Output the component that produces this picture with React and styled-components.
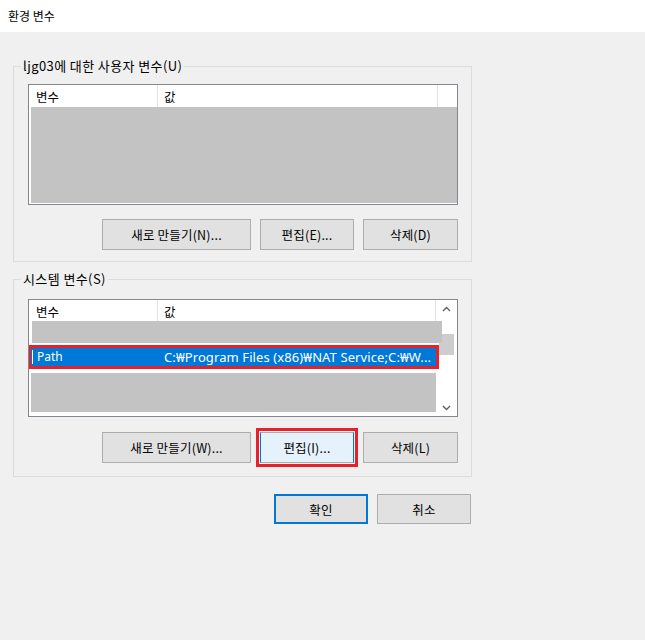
import React from 'react'
import styled, { createGlobalStyle } from 'styled-components'

const GlobalStyle = createGlobalStyle`
    html, body {
        margin: 0;
        padding: 0;
        background: #f0f0f0;
    }
    body {
        font-family: "Noto Sans CJK KR", "Noto Sans", sans-serif;
        font-size: 12px;
        color: #000;
    }
`

const Window = styled.div`
    width: 645px;
    height: 640px;
    background: #f0f0f0;
    display: flex;
    flex-direction: column;
`

const TitleBar = styled.div`
    height: 32px;
    background: #fff;
    display: flex;
    align-items: center;
    padding: 0 0 2px 8px;
    box-sizing: border-box;
    font-size: 12px;
`

const Content = styled.div`
    width: 459px;
    padding: 26px 0 0 13px;
    display: flex;
    flex-direction: column;
`

const Group = styled.fieldset`
    margin: ${p => p.$mt || 0}px 0 0 0;
    border: 1px solid #dcdcdc;
    padding: ${p => p.$pt}px 13px ${p => p.$pb}px 14px;
    min-width: 0;
    display: flex;
    flex-direction: column;
`

const Legend = styled.legend`
    padding: 0 2px;
    margin-left: -7px;
    font-size: 13px;
    letter-spacing: 0.4px;
    line-height: 16px;
`

const ListView = styled.div`
    height: ${p => p.$h}px;
    box-sizing: border-box;
    border: 1px solid #828790;
    background: #fff;
    display: flex;
    overflow: hidden;
`

const ListMain = styled.div`
    flex: 1;
    display: flex;
    flex-direction: column;
    min-width: 0;
`

const Header = styled.div`
    height: ${p => p.$h}px;
    display: flex;
    flex-shrink: 0;
`

const HeaderCell = styled.div`
    width: ${p => (p.$w ? `${p.$w}px` : 'auto')};
    flex: ${p => (p.$w ? 'none' : 1)};
    box-sizing: border-box;
    border-right: ${p => (p.$last ? 'none' : '1px solid #e5e5e5')};
    padding: 3px 0 0 ${p => p.$pl || 0}px;
    font-size: 12.5px;
    line-height: 18px;
`

const Redacted = styled.div`
    background: #c3c3c3;
    height: ${p => (p.$h ? `${p.$h}px` : 'auto')};
    flex: ${p => (p.$h ? 'none' : 1)};
    width: ${p => (p.$w ? `${p.$w}px` : 'auto')};
    margin: ${p => p.$m || '0'};
    position: relative;
    z-index: 1;
`

const SelectedRow = styled.div`
    height: 24px;
    box-sizing: border-box;
    width: 411px;
    margin-left: -1px;
    border: 3px solid #e8202a;
    background: #0078d7;
    color: #fff;
    display: flex;
    align-items: center;
    font-family: "Noto Sans", "Noto Sans CJK KR", sans-serif;
    font-size: 12px;
    position: relative;
    z-index: 2;
    &::before {
        content: '';
        width: 1px;
        height: 14px;
        background: #fff;
        margin-left: 1px;
    }
`

const RowCell = styled.div`
    width: ${p => (p.$w ? `${p.$w}px` : 'auto')};
    flex: ${p => (p.$w ? 'none' : 1)};
    padding-left: ${p => p.$pl}px;
    white-space: nowrap;
    box-sizing: border-box;
    line-height: 16px;
    font-size: ${p => p.$fs || 12}px;
    letter-spacing: ${p => p.$ls || 0}px;
`

const ScrollBar = styled.div`
    width: 21px;
    flex-shrink: 0;
    background: #fff;
    display: flex;
    flex-direction: column;
    align-items: center;
`

const Arrow = styled.div`
    height: ${p => p.$h}px;
    display: flex;
    align-items: center;
    justify-content: center;
    color: #606060;
`

const Track = styled.div`
    flex: 1;
    width: 100%;
    display: flex;
    justify-content: center;
`

const Thumb = styled.div`
    width: 15px;
    height: 21px;
    margin-top: 17px;
    background: #cdcdcd;
`

const ButtonRow = styled.div`
    display: flex;
    justify-content: flex-end;
    gap: ${p => p.$gap || 9}px;
    margin-top: ${p => p.$mt}px;
    padding-right: ${p => p.$pr || 0}px;
`

const Button = styled.button`
    width: ${p => p.$w}px;
    height: ${p => p.$h || 31}px;
    box-sizing: border-box;
    padding: 0;
    margin: 0;
    background: ${p => (p.$hot ? '#e5f1fb' : '#e1e1e1')};
    border: ${p => (p.$default ? '2px solid #0078d7' : '1px solid #adadad')};
    border-left-color: ${p => (p.$hot ? '#0078d7' : undefined)};
    border-right-color: ${p => (p.$hot ? '#0078d7' : undefined)};
    outline: ${p => (p.$marked ? '3px solid #e8202a' : 'none')};
    outline-offset: 1px;
    font-family: "Noto Sans CJK KR", "Noto Sans", sans-serif;
    font-size: 12.5px;
    letter-spacing: 0.2px;
    color: #000;
`

const Chevron = ({ up }) => (
  <svg width="9" height="6" viewBox="0 0 9 6">
    <path
      d={up ? 'M1 5 L4.5 1.5 L8 5' : 'M1 1 L4.5 4.5 L8 1'}
      fill="none"
      stroke="#606060"
      strokeWidth="1.4"
    />
  </svg>
)

const App = () => {
  return (
    <Window>
      <GlobalStyle />
      <TitleBar>환경 변수</TitleBar>
      <Content>
        <Group $pt={10} $pb={11}>
          <Legend>ljg03에 대한 사용자 변수(U)</Legend>
          <ListView $h={121}>
            <ListMain>
              <Header $h={22}>
                <HeaderCell $w={129} $pl={7}>변수</HeaderCell>
                <HeaderCell $w={280} $pl={6}>값</HeaderCell>
                <HeaderCell $last />
              </Header>
              <Redacted $m="0 0 1px 2px" />
            </ListMain>
          </ListView>
          <ButtonRow $mt={14}>
            <Button $w={149}>새로 만들기(N)...</Button>
            <Button $w={94}>편집(E)...</Button>
            <Button $w={95}>삭제(D)</Button>
          </ButtonRow>
        </Group>

        <Group $mt={9} $pt={12} $pb={13}>
          <Legend>시스템 변수(S)</Legend>
          <ListView $h={118}>
            <ListMain>
              <Header $h={21}>
                <HeaderCell $w={129} $pl={7}>변수</HeaderCell>
                <HeaderCell $pl={6}>값</HeaderCell>
              </Header>
              <Redacted $h={22} $w={410} $m="0 0 2px 3px" />
              <SelectedRow>
                <RowCell $w={128} $pl={4}>Path</RowCell>
                <RowCell $pl={3} $fs={13} $ls={0.1}>C:₩Program Files (x86)₩NAT Service;C:₩W...</RowCell>
              </SelectedRow>
              <Redacted $h={39} $m="4px 0 0 2px" />
            </ListMain>
            <ScrollBar>
              <Arrow $h={17}><Chevron up /></Arrow>
              <Track><Thumb /></Track>
              <Arrow $h={17}><Chevron /></Arrow>
            </ScrollBar>
          </ListView>
          <ButtonRow $mt={15}>
            <Button $w={149}>새로 만들기(W)...</Button>
            <Button $w={94} $hot $marked>편집(I)...</Button>
            <Button $w={95}>삭제(L)</Button>
          </ButtonRow>
        </Group>

        <ButtonRow $mt={17} $pr={1}>
          <Button $w={94} $h={30} $default>확인</Button>
          <Button $w={94} $h={30}>취소</Button>
        </ButtonRow>
      </Content>
    </Window>
  )
}

export default App
